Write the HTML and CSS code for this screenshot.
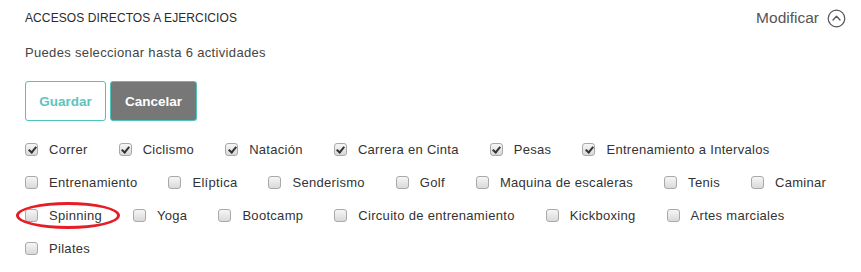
FILE: index.html
```html
<!DOCTYPE html>
<html lang="es">
<head>
<meta charset="utf-8">
<title>Accesos directos a ejercicios</title>
<link rel="stylesheet" href="styles.css">
</head>
<body>
<section class="panel">
  <header class="panel-header">
    <h2 class="panel-title">ACCESOS DIRECTOS A EJERCICIOS</h2>
    <a class="modify" href="#">
      <span>Modificar</span>
      <svg class="chevron" width="19" height="19" viewBox="0 0 19 19" aria-hidden="true">
        <circle cx="9.5" cy="9.5" r="8.3" fill="none" stroke="#555" stroke-width="1.2"/>
        <path d="M6 11 L9.5 7.3 L13 11" fill="none" stroke="#555" stroke-width="1.3" stroke-linecap="round" stroke-linejoin="round"/>
      </svg>
    </a>
  </header>
  <p class="hint">Puedes seleccionar hasta 6 actividades</p>
  <div class="actions">
    <button class="btn btn-save" type="button">Guardar</button>
    <button class="btn btn-cancel" type="button">Cancelar</button>
  </div>
  <ul class="options">
    <li class="option"><span class="cb checked"></span>Correr</li>
    <li class="option"><span class="cb checked"></span>Ciclismo</li>
    <li class="option"><span class="cb checked"></span>Natación</li>
    <li class="option"><span class="cb checked"></span>Carrera en Cinta</li>
    <li class="option"><span class="cb checked"></span>Pesas</li>
    <li class="option"><span class="cb checked"></span>Entrenamiento a Intervalos</li>
    <li class="option"><span class="cb"></span>Entrenamiento</li>
    <li class="option"><span class="cb"></span>Elíptica</li>
    <li class="option"><span class="cb"></span>Senderismo</li>
    <li class="option"><span class="cb"></span>Golf</li>
    <li class="option"><span class="cb"></span>Maquina de escaleras</li>
    <li class="option"><span class="cb"></span>Tenis</li>
    <li class="option"><span class="cb"></span>Caminar</li>
    <li class="option highlighted"><span class="cb"></span>Spinning<span class="ring"></span></li>
    <li class="option"><span class="cb"></span>Yoga</li>
    <li class="option"><span class="cb"></span>Bootcamp</li>
    <li class="option"><span class="cb"></span>Circuito de entrenamiento</li>
    <li class="option"><span class="cb"></span>Kickboxing</li>
    <li class="option"><span class="cb"></span>Artes marciales</li>
    <li class="option"><span class="cb"></span>Pilates</li>
  </ul>
</section>
</body>
</html>
```
FILE: styles.css
```css
* { box-sizing: border-box; }
html, body {
  margin: 0;
  background: #fff;
}
body {
  font-family: "Liberation Sans", Arial, sans-serif;
  color: #333;
}
.panel {
  padding: 8px 15px 0 25px;
}
.panel-header {
  display: flex;
  justify-content: space-between;
  align-items: center;
  height: 20px;
}
.panel-title {
  margin: 0;
  font-size: 12px;
  font-weight: normal;
  color: #2b2b2b;
  letter-spacing: 0.1px;
}
.modify {
  display: flex;
  align-items: center;
  gap: 8px;
  text-decoration: none;
  color: #555;
  font-size: 15.5px;
}
.chevron { display: block; }
.hint {
  margin: 17px 0 0;
  font-size: 13px;
  line-height: 16px;
  letter-spacing: 0.33px;
  color: #444;
}
.actions {
  display: flex;
  gap: 4px;
  margin-top: 20px;
}
.btn {
  height: 40px;
  border: 1px solid #4fc3bd;
  border-radius: 3px;
  font-family: inherit;
  font-size: 13.5px;
  font-weight: bold;
  padding: 0 10px;
}
.btn-save {
  width: 81px;
  background: #fff;
  color: #5ec4be;
}
.btn-cancel {
  width: 87px;
  background: #777;
  color: #fff;
}
.options {
  list-style: none;
  margin: 12px 0 0;
  padding: 0;
  display: flex;
  flex-wrap: wrap;
  column-gap: 31px;
}
.option {
  position: relative;
  display: flex;
  align-items: center;
  height: 33px;
  font-size: 13px;
  letter-spacing: 0.3px;
  color: #333;
}
.cb {
  width: 13px;
  height: 13px;
  margin-right: 11px;
  border: 1px solid #a9a9a9;
  border-radius: 3px;
  background: linear-gradient(#f6f6f6, #d9d9d9);
  position: relative;
}
.cb.checked::after {
  content: "";
  position: absolute;
  left: 3.5px;
  top: 0.5px;
  width: 3px;
  height: 6px;
  border-right: 2px solid #333;
  border-bottom: 2px solid #333;
  transform: rotate(40deg);
}
.ring {
  position: absolute;
  left: -9px;
  top: 3px;
  width: 104px;
  height: 27px;
  border: 3px solid #e51d26;
  border-radius: 50%;
  pointer-events: none;
}
```
